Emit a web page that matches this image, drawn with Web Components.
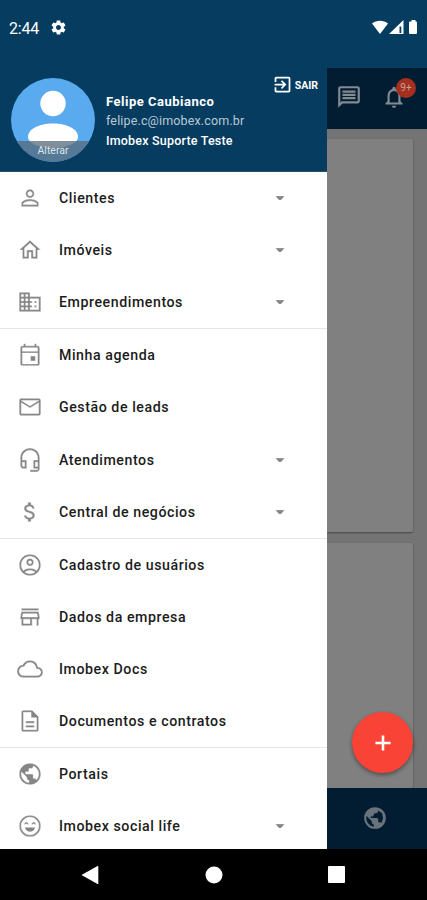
<!DOCTYPE html>
<html lang="pt-BR">
<head>
<meta charset="UTF-8">
<meta name="viewport" content="width=device-width, initial-scale=1">
<title>Imobex</title>
<style>
    body {
        margin: 0;
        font-family: Roboto, "Liberation Sans", sans-serif;
        overflow: hidden;
    }
</style>
</head>
<body>
<imobex-app></imobex-app>

<script>
const ICONS = {
    person: 'M12 5.9c1.16 0 2.1.94 2.1 2.1s-.94 2.1-2.1 2.1S9.9 9.16 9.9 8s.94-2.1 2.1-2.1m0 9c2.97 0 6.1 1.46 6.1 2.1v1.1H5.9V17c0-.64 3.13-2.1 6.1-2.1M12 4C9.79 4 8 5.79 8 8s1.79 4 4 4 4-1.79 4-4-1.79-4-4-4zm0 9c-2.67 0-8 1.34-8 4v3h16v-3c0-2.66-5.33-4-8-4z',
    home: 'M12 5.69l5 4.5V18h-2v-6H9v6H7v-7.81l5-4.5M12 3L2 12h3v8h6v-6h2v6h6v-8h3L12 3z',
    business: 'M12 7V3H2v18h20V7H12zM6 19H4v-2h2v2zm0-4H4v-2h2v2zm0-4H4V9h2v2zm0-4H4V5h2v2zm4 12H8v-2h2v2zm0-4H8v-2h2v2zm0-4H8V9h2v2zm0-4H8V5h2v2zm10 12h-8v-2h2v-2h-2v-2h2v-2h-2V9h8v10zm-2-8h-2v2h2v-2zm0 4h-2v2h2v-2z',
    event: 'M12.500 13h4.500v4.500h-4.500zM16 1.500V3.500H8V1.500H6v2H5c-1.110 0-2 .9-2 2V20c0 1.100.890 2 2 2h14c1.100 0 2-.9 2-2V5.500c0-1.100-.9-2-2-2h-1v-2h-2zM19 20.200H5V10.200h14v10zM19 8.500H5V5.300h14v3.200z',
    mail: 'M22 6c0-1.1-.9-2-2-2H4c-1.1 0-2 .9-2 2v12c0 1.1.9 2 2 2h16c1.1 0 2-.9 2-2V6zm-2 0l-8 5-8-5h16zm0 12H4V8l8 5 8-5v10z',
    headset: 'M12 1c-4.97 0-9 4.03-9 9v7c0 1.66 1.34 3 3 3h3v-8H5v-2c0-3.87 3.13-7 7-7s7 3.13 7 7v2h-4v8h4v1h-7v2h6c1.66 0 3-1.34 3-3V10c0-4.97-4.03-9-9-9zM7 14v4H6c-.55 0-1-.45-1-1v-3h2zm12 4h-2v-4h2v4z',
    money: 'M11.8 10.9c-2.27-.59-3-1.2-3-2.15 0-1.09 1.01-1.85 2.7-1.85 1.78 0 2.44.85 2.5 2.1h2.21c-.07-1.72-1.12-3.3-3.21-3.81V3h-3v2.16c-1.94.42-3.5 1.68-3.5 3.61 0 2.31 1.91 3.46 4.7 4.13 2.5.6 3 1.48 3 2.41 0 .69-.49 1.79-2.7 1.79-2.06 0-2.87-.92-2.98-2.1h-2.2c.12 2.19 1.76 3.42 3.68 3.83V21h3v-2.15c1.95-.37 3.5-1.5 3.5-3.55 0-2.84-2.43-3.81-4.7-4.4z',
    account: 'M12 2C6.48 2 2 6.48 2 12s4.48 10 10 10 10-4.48 10-10S17.52 2 12 2zM7.35 18.5C8.66 17.56 10.26 17 12 17s3.34.56 4.65 1.5c-1.31.94-2.91 1.5-4.65 1.5s-3.34-.56-4.65-1.5zm10.79-1.38C16.45 15.8 14.32 15 12 15s-4.45.8-6.14 2.12C4.7 15.73 4 13.95 4 12c0-4.42 3.58-8 8-8s8 3.58 8 8c0 1.95-.7 3.73-1.86 5.12zM12 6c-1.93 0-3.5 1.57-3.5 3.5S10.07 13 12 13s3.5-1.57 3.5-3.5S13.93 6 12 6zm0 5c-.83 0-1.5-.67-1.5-1.5S11.17 8 12 8s1.5.67 1.5 1.5S12.83 11 12 11z',
    store: 'M18.36 9l.6 3H5.04l.6-3h12.72M20 4H4v2h16V4zm0 3H4l-1 5v2h1v6h10v-6h4v6h2v-6h1v-2l-1-5zM6 18v-4h6v4H6z',
    cloud: 'M19.35 10.04C18.67 6.59 15.64 4 12 4 9.11 4 6.6 5.64 5.35 8.04 2.34 8.36 0 10.91 0 14c0 3.31 2.69 6 6 6h13c2.76 0 5-2.24 5-5 0-2.64-2.05-4.78-4.65-4.96zM19 18H6c-2.21 0-4-1.79-4-4 0-2.05 1.53-3.76 3.56-3.97l1.07-.11.5-.95C8.08 7.14 9.94 6 12 6c2.62 0 4.88 1.86 5.39 4.43l.3 1.5 1.53.11c1.56.1 2.78 1.41 2.78 2.96 0 1.65-1.35 3-3 3z',
    document: 'M8 16h8v2H8zm0-4h8v2H8zm6-10H6c-1.1 0-2 .9-2 2v16c0 1.1.89 2 1.99 2H18c1.1 0 2-.9 2-2V8l-6-6zm4 18H6V4h7v5h5v11z',
    globe: 'M12 2C6.48 2 2 6.48 2 12s4.48 10 10 10 10-4.48 10-10S17.52 2 12 2zm-1 17.93c-3.95-.49-7-3.85-7-7.93 0-.62.08-1.21.21-1.79L9 15v1c0 1.1.9 2 2 2v1.93zm6.9-2.54c-.26-.81-1-1.39-1.9-1.39h-1v-3c0-.55-.45-1-1-1H8v-2h2c.55 0 1-.45 1-1V7h2c1.1 0 2-.9 2-2v-.41c2.93 1.19 5 4.06 5 7.41 0 2.08-.8 3.97-2.1 5.39z',
    // west/north land only, as the tab bar shows it
    globeAlt: 'M12 2a10 10 0 1 0 0 20 10 10 0 0 0 0-20zM4.300 10.200L9 15v1c0 1 .8 2 2 2v2c-4-.5-7-3.900-7-8 0-.6.100-1.200.300-1.800zM8 10.500h2l1.500-3H13c1.200 0 2-1 2-2.500l3.500 2.500L19.500 12l-1.700 4.800c-.3-.6-1-.8-1.800-.8h-1v-3.200l-1.500-.8H8z',
    smile: 'M12 2a10 10 0 1 0 0 20 10 10 0 0 0 0-20zm0 18.200a8.200 8.200 0 1 1 0-16.400 8.200 8.200 0 0 1 0 16.400zM7 13.200h10c-.6 2.500-2.500 4.300-5 4.300s-4.400-1.800-5-4.300zM6.500 10.600c.2-1.500 1-2.400 2.100-2.400s1.900.9 2.100 2.400H9.400c-.3-.9-1.300-.9-1.600 0zM13.300 10.600c.2-1.500 1-2.400 2.100-2.400s1.900.9 2.100 2.400h-1.300c-.3-.9-1.300-.9-1.600 0z',
    arrow: 'M6.500 9.500h11L13.500 14.500h-3z',
    exit: 'M10.090 15.590L11.500 17l5-5-5-5-1.410 1.410L12.670 11H3v2h9.670l-2.580 2.590zM19 3H5c-1.110 0-2 .9-2 2v4h2V5h14v14H5v-4H3v4c0 1.100.890 2 2 2h14c1.100 0 2-.9 2-2V5c0-1.100-.9-2-2-2z',
    chat: 'M4 4h16v12H5.170L4 17.170V4m0-2c-1.100 0-1.990.9-1.990 2L2 22l4-4h14c1.100 0 2-.9 2-2V4c0-1.100-.9-2-2-2H4zm2 10h12v2H6v-2zm0-3h12v2H6V9zm0-3h12v2H6V6z',
    bell: 'M12 22c1.100 0 2-.9 2-2h-4c0 1.100.9 2 2 2zm6-6v-5c0-3.070-1.630-5.640-4.500-6.320V4c0-.830-.670-1.500-1.500-1.500s-1.500.670-1.500 1.500v.680C7.640 5.360 6 7.920 6 11v5l-2 2v1h16v-1l-2-2zm-2 1H8v-6c0-2.480 1.510-4.500 4-4.500s4 2.020 4 4.500v6z',
    gear: 'M19.430 12.980c.040-.320.070-.640.070-.980s-.030-.660-.070-.980l2.110-1.650c.190-.150.240-.420.120-.640l-2-3.460c-.120-.220-.390-.3-.610-.220l-2.490 1c-.520-.4-1.080-.730-1.690-.980l-.380-2.650C14.460 2.180 14.250 2 14 2h-4c-.250 0-.460.180-.490.420l-.380 2.650c-.610.250-1.170.590-1.690.980l-2.490-1c-.230-.090-.490 0-.610.220l-2 3.460c-.130.220-.070.490.120.640l2.110 1.650c-.040.320-.070.650-.070.980s.030.660.070.980l-2.110 1.650c-.190.150-.240.420-.120.640l2 3.460c.120.220.390.3.610.220l2.490-1c.520.4 1.080.730 1.690.980l.380 2.650c.030.240.240.420.490.420h4c.250 0 .460-.180.490-.420l.380-2.650c.610-.250 1.170-.590 1.690-.980l2.490 1c.230.090.490 0 .610-.220l2-3.460c.120-.220.070-.490-.120-.640l-2.110-1.650zM12 15.500c-1.930 0-3.500-1.570-3.500-3.500s1.570-3.500 3.500-3.500 3.500 1.570 3.500 3.500-1.570 3.500-3.500 3.500z',
    plus: 'M19 13.200h-5.800V19h-2.400v-5.800H5v-2.400h5.800V5h2.400v5.800H19z'
};

class MdIcon extends HTMLElement {
    connectedCallback() {
        this.attachShadow({ mode: 'open' });
        this.shadowRoot.innerHTML = `
            <style>
                :host {
                    display: block;
                    flex: none;
                    width: var(--size, 26px);
                    height: var(--size, 26px);
                }
                svg {
                    display: block;
                    width: 100%;
                    height: 100%;
                    fill: currentColor;
                    stroke: var(--thin, none);
                    stroke-width: 0.4;
                }
            </style>
            <svg viewBox="0 0 24 24"><path fill-rule="evenodd" d="${ICONS[this.getAttribute('name')]}"/></svg>
        `;
    }
}
customElements.define('md-icon', MdIcon);

class StatusBar extends HTMLElement {
    connectedCallback() {
        this.attachShadow({ mode: 'open' });
        this.shadowRoot.innerHTML = `
            <style>
                :host {
                    display: flex;
                    align-items: center;
                    box-sizing: border-box;
                    height: 68px;
                    padding: 0 7px 13px 9px;
                    background: #053c60;
                    color: #fff;
                    font-size: 16px;
                }
                md-icon {
                    --size: 17px;
                    margin-left: 11px;
                }
                .time {
                    width: 30px;
                    padding-top: 1px;
                    white-space: nowrap;
                    letter-spacing: -0.2px;
                }
                .signals {
                    margin-left: auto;
                    display: flex;
                    gap: 2px;
                }
                .signals svg {
                    display: block;
                    fill: #fff;
                }
                .wifi {
                    margin-right: -1px;
                }
            </style>
            <span class="time">2:44</span>
            <md-icon name="gear"></md-icon>
            <div class="signals">
                <svg class="wifi" width="16" height="15" viewBox="0 0 16 15"><path d="M0 3.500C4.500-.3 11.500-.3 16 3.500L8 14z"/></svg>
                <svg width="15" height="15" viewBox="0 0 15 15"><path fill-rule="evenodd" d="M0 14L14.500 0v14zM10.500 6.500v6.500h1.800V6.500z"/></svg>
                <svg width="14" height="15" viewBox="0 0 14 15"><path d="M5.500 0h4v1.500H10q1 0 1 1V13q0 1-1 1H4q-1 0-1-1V2.500q0-1 1-1h1.500z"/></svg>
            </div>
        `;
    }
}
customElements.define('status-bar', StatusBar);

class UserAvatar extends HTMLElement {
    connectedCallback() {
        this.attachShadow({ mode: 'open' });
        this.shadowRoot.innerHTML = `
            <style>
                :host {
                    display: grid;
                    flex: none;
                    width: 84px;
                    height: 84px;
                    border-radius: 50%;
                    overflow: hidden;
                    background: #5aaaf0;
                }
                svg, .change {
                    grid-area: 1 / 1;
                }
                .change {
                    align-self: end;
                    height: 21px;
                    background: rgba(85, 105, 120, 0.75);
                    color: #dfe6eb;
                    font-size: 10.5px;
                    line-height: 19px;
                    text-align: center;
                }
            </style>
            <svg width="84" height="84" viewBox="0 0 84 84" fill="#fff">
                <circle cx="42" cy="25.500" r="12.700"/>
                <path d="M17 59c0-8 11-13.500 25-13.500S67 51 67 59c0 6-11 11-25 11S17 65 17 59z"/>
            </svg>
            <div class="change"><slot></slot></div>
        `;
    }
}
customElements.define('user-avatar', UserAvatar);

class DrawerHeader extends HTMLElement {
    connectedCallback() {
        this.attachShadow({ mode: 'open' });
        this.shadowRoot.innerHTML = `
            <style>
                :host {
                    display: flex;
                    box-sizing: border-box;
                    height: 104px;
                    padding: 10px 9px 0 11px;
                    gap: 11px;
                    background: #053c60;
                    border-bottom: 1px solid #2b4a6c;
                    color: #fff;
                }
                .info {
                    flex: 1;
                    padding-top: 14px;
                    font-size: 12.5px;
                    font-weight: 500;
                    line-height: 19.300px;
                    white-space: nowrap;
                }
                .name {
                    font-size: 13px;
                    font-weight: 700;
                    letter-spacing: 0.5px;
                }
                .mail {
                    color: #b9cad6;
                    font-weight: 400;
                    letter-spacing: 0.15px;
                }
                .company {
                    letter-spacing: 0.2px;
                }
                .logout {
                    display: flex;
                    align-items: center;
                    align-self: flex-start;
                    gap: 2px;
                    margin-top: -4px;
                    margin-left: -60px;
                    font-size: 10.5px;
                    font-weight: 700;
                }
                .logout span {
                    padding-top: 2px;
                }
                md-icon {
                    --size: 21px;
                }
            </style>
            <user-avatar>Alterar</user-avatar>
            <div class="info">
                <div class="name">Felipe Caubianco</div>
                <div class="mail">felipe.c@imobex.com.br</div>
                <div class="company">Imobex Suporte Teste</div>
            </div>
            <div class="logout"><md-icon name="exit"></md-icon><span>SAIR</span></div>
        `;
    }
}
customElements.define('drawer-header', DrawerHeader);

class MenuItem extends HTMLElement {
    connectedCallback() {
        this.attachShadow({ mode: 'open' });
        this.shadowRoot.innerHTML = `
            <style>
                :host {
                    display: flex;
                    align-items: center;
                    box-sizing: border-box;
                    height: 52.100px;
                    padding: 0 37px 0 17px;
                    color: #1c1c1c;
                    font-size: 14.2px;
                    font-weight: 500;
                    letter-spacing: 0.55px;
                    white-space: nowrap;
                }
                md-icon {
                    color: #858585;
                    --thin: #fff;
                }
                .label {
                    flex: 1;
                    margin-left: 16px;
                }
                .arrow {
                    --size: 20px;
                }
            </style>
            <md-icon name="${this.getAttribute('icon')}"></md-icon>
            <span class="label"><slot></slot></span>
            ${this.hasAttribute('expandable') ? '<md-icon class="arrow" name="arrow"></md-icon>' : ''}
        `;
    }
}
customElements.define('menu-item', MenuItem);

class MenuGroup extends HTMLElement {
    connectedCallback() {
        this.attachShadow({ mode: 'open' });
        this.shadowRoot.innerHTML = `
            <style>
                :host {
                    display: block;
                    border-bottom: 1px solid #e6e6e6;
                }
                :host(:last-of-type) {
                    border-bottom: none;
                }
            </style>
            <slot></slot>
        `;
    }
}
customElements.define('menu-group', MenuGroup);

class NavDrawer extends HTMLElement {
    connectedCallback() {
        this.attachShadow({ mode: 'open' });
        this.shadowRoot.innerHTML = `
            <style>
                :host {
                    display: block;
                    width: 327px;
                    overflow: hidden;
                    background: #fff;
                }
            </style>
            <drawer-header></drawer-header>
            <menu-group>
                <menu-item icon="person" expandable>Clientes</menu-item>
                <menu-item icon="home" expandable>Imóveis</menu-item>
                <menu-item icon="business" expandable>Empreendimentos</menu-item>
            </menu-group>
            <menu-group>
                <menu-item icon="event">Minha agenda</menu-item>
                <menu-item icon="mail">Gestão de leads</menu-item>
                <menu-item icon="headset" expandable>Atendimentos</menu-item>
                <menu-item icon="money" expandable>Central de negócios</menu-item>
            </menu-group>
            <menu-group>
                <menu-item icon="account">Cadastro de usuários</menu-item>
                <menu-item icon="store">Dados da empresa</menu-item>
                <menu-item icon="cloud">Imobex Docs</menu-item>
                <menu-item icon="document">Documentos e contratos</menu-item>
            </menu-group>
            <menu-group>
                <menu-item icon="globe">Portais</menu-item>
                <menu-item icon="smile" expandable>Imobex social life</menu-item>
            </menu-group>
        `;
    }
}
customElements.define('nav-drawer', NavDrawer);

// the part of the page left visible beside the open drawer, already dimmed
class DimmedPage extends HTMLElement {
    connectedCallback() {
        this.attachShadow({ mode: 'open' });
        this.shadowRoot.innerHTML = `
            <style>
                :host {
                    display: flex;
                    flex-direction: column;
                    position: relative;
                    overflow: hidden;
                    background: #747474;
                }
                header {
                    display: flex;
                    align-items: center;
                    flex: none;
                    height: 61px;
                    box-sizing: border-box;
                    padding: 0 20px 3px 9px;
                    justify-content: space-between;
                    background: #021d31;
                    color: #828a92;
                }
                .bell {
                    position: relative;
                }
                .badge {
                    position: absolute;
                    left: 15px;
                    top: -6px;
                    width: 20px;
                    height: 20px;
                    border-radius: 50%;
                    background: #a5301f;
                    color: #c4a09a;
                    font-size: 10px;
                    line-height: 20px;
                    text-align: center;
                }
                main {
                    flex: 1;
                    min-height: 0;
                    display: flex;
                    flex-direction: column;
                    gap: 11px;
                    padding: 10px 14px 0 0;
                }
                .card {
                    flex: none;
                    height: 393px;
                    border-radius: 0 2px 2px 0;
                    background: #808080;
                    box-shadow: 0 1px 2px rgba(0, 0, 0, 0.4);
                }
                .card.last {
                    flex: 1;
                    min-height: 0;
                }
                footer {
                    flex: none;
                    display: flex;
                    align-items: center;
                    position: relative;
                    box-sizing: border-box;
                    height: 61px;
                    padding: 0 0 1px 35px;
                    background: #021d31;
                    color: #69737c;
                }
                .fab {
                    position: absolute;
                    right: 14px;
                    bottom: 76px;
                    width: 61px;
                    height: 61px;
                    border-radius: 50%;
                    display: grid;
                    place-items: center;
                    background: #f84336;
                    color: #fff;
                    box-shadow: 0 2px 4px rgba(0, 0, 0, 0.4);
                }
            </style>
            <header>
                <md-icon name="chat"></md-icon>
                <div class="bell"><md-icon name="bell"></md-icon><span class="badge">9+</span></div>
            </header>
            <main>
                <div class="card"></div>
                <div class="card last"></div>
            </main>
            <footer><md-icon name="globeAlt"></md-icon></footer>
            <div class="fab"><md-icon name="plus"></md-icon></div>
        `;
    }
}
customElements.define('dimmed-page', DimmedPage);

class SystemNav extends HTMLElement {
    connectedCallback() {
        this.attachShadow({ mode: 'open' });
        this.shadowRoot.innerHTML = `
            <style>
                :host {
                    display: flex;
                    align-items: center;
                    justify-content: space-between;
                    padding: 0 82px 0 81px;
                    background: #000;
                }
                svg {
                    display: block;
                    fill: #fff;
                }
            </style>
            <svg width="18" height="20" viewBox="0 0 18 20"><path d="M0.500 10L16.500 1q.8-.3.8.6v16.800q0 .9-.8.6z"/></svg>
            <svg width="18" height="18" viewBox="0 0 18 18"><circle cx="9" cy="9" r="8.500"/></svg>
            <svg width="17" height="17" viewBox="0 0 17 17"><rect width="17" height="17" rx="1"/></svg>
        `;
    }
}
customElements.define('system-nav', SystemNav);

class ImobexApp extends HTMLElement {
    connectedCallback() {
        this.attachShadow({ mode: 'open' });
        this.shadowRoot.innerHTML = `
            <style>
                :host {
                    display: grid;
                    grid-template-columns: 327px 1fr;
                    grid-template-rows: 68px 781px 51px;
                    width: 427px;
                    height: 900px;
                }
                status-bar, system-nav {
                    grid-column: 1 / -1;
                }
            </style>
            <status-bar></status-bar>
            <nav-drawer></nav-drawer>
            <dimmed-page></dimmed-page>
            <system-nav></system-nav>
        `;
    }
}
customElements.define('imobex-app', ImobexApp);
</script>
</body>
</html>
